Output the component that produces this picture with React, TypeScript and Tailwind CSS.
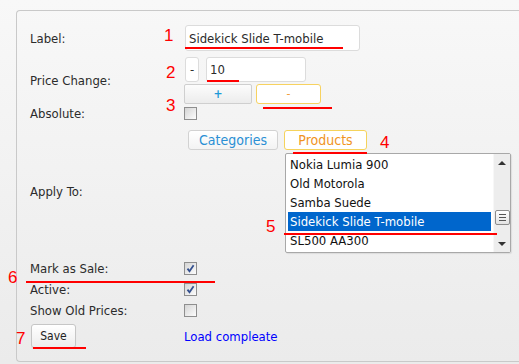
import React from 'react';

const products = ['Nokia Lumia 900', 'Old Motorola', 'Samba Suede', 'Sidekick Slide T-mobile', 'SL500 AA300'];

function CheckBox({ checked }: { checked?: boolean }) {
  return (
    <span className="relative block h-[13px] w-[13px] border border-[#8e8e8e] bg-linear-to-br from-[#d4d4d4] to-[#fdfdfd]">
      {checked && (
        <svg width="11" height="11" viewBox="0 0 11 11" className="absolute left-0 top-0">
          <path d="M2.5 5.6 L4.5 8.2 L8.6 2.3" fill="none" stroke="#34508f" strokeWidth="1.8" />
        </svg>
      )}
    </span>
  );
}

function Row({ label, className, children }: { label?: React.ReactNode; className?: string; children?: React.ReactNode }) {
  return (
    <div className={'flex items-center ' + (className ?? '')}>
      <div className="w-[154px] shrink-0 leading-[13px] text-[#2b2b2b]">{label}</div>
      <div className="leading-[13px]">{children}</div>
    </div>
  );
}

export default function App() {
  return (
    <div className="relative h-[364px] w-[519px] overflow-hidden bg-linear-to-b from-[#f8f8f8] to-[#ebebeb] pl-[16px] pt-[10px] font-['DejaVu_Sans_Condensed','DejaVu_Sans',sans-serif] text-[13px]">
      <div className="flex h-[352px] w-[520px] flex-col rounded-l-[4px] border border-r-0 border-[#c9c9c9] pl-[13px] pt-[14px]">
        <Row label="Label:">
          <input
            readOnly
            defaultValue="Sidekick Slide T-mobile"
            className="ml-[1px] block h-[26px] w-[175px] rounded-[3px] border border-[#dcdcdc] bg-white px-[3px] text-[#2b2b2b] outline-none"
          />
        </Row>

        <Row label="Price Change:" className="mt-[6px]">
          <div className="flex flex-col">
            <div className="flex">
              <div className="ml-[1px] flex h-[25px] w-[14px] items-center justify-center rounded-[3px] border border-[#dcdcdc] bg-white text-[#333]">
                -
              </div>
              <input
                readOnly
                defaultValue="10"
                className="ml-[7px] block h-[25px] w-[100px] rounded-[3px] border border-[#dcdcdc] bg-white px-[3px] text-[#2b2b2b] outline-none"
              />
            </div>
            <div className="mt-[2px] flex">
              <button className="flex h-[20px] w-[68px] items-center justify-center rounded-[2px] border border-[#cfcfcf] bg-linear-to-b from-[#fcfcfc] to-[#ececec] text-[12px] font-bold text-[#1e9ad8]">
                +
              </button>
              <button className="ml-[4px] flex h-[20px] w-[65px] items-center justify-center rounded-[3px] border border-[#f7d260] bg-white text-[12px] text-[#f0a040]">
                -
              </button>
            </div>
          </div>
        </Row>

        <Row label="Absolute:" className="mt-[3px]">
          <CheckBox />
        </Row>

        <Row label="Apply To:" className="mt-[10px]">
          <div className="flex flex-col">
            <div className="ml-[4px] flex h-[20px]">
              <button className="flex w-[90px] items-center justify-center rounded-[3px] border border-[#d2d2d2] bg-linear-to-b from-white to-[#f3f3f3] text-[14px] font-medium text-[#2a8fd4]">
                Categories
              </button>
              <button className="ml-[6px] flex w-[83px] items-center justify-center rounded-[3px] border border-[#f5d35c] bg-white text-[14px] font-medium text-[#f0941e]">
                Products
              </button>
            </div>
            <div className="ml-[101px] mt-[3px] flex h-[100px] w-[226px] rounded-[2px] border border-[#a8a8a8] bg-white shadow-[1px_1px_1px_rgba(0,0,0,0.08)]">
              <ul className="flex-1 p-[2px] pt-[1px]">
                {products.map((p, i) => (
                  <li
                    key={p}
                    className={
                      'h-[19px] px-[2px] leading-[20px] whitespace-nowrap ' +
                      (i === 3 ? 'bg-[#0066cc] text-white' : 'text-[#111]')
                    }
                  >
                    {p}
                  </li>
                ))}
              </ul>
              <div className="flex w-[17px] flex-col items-center border-l border-[#f7f7f7] bg-[#ededed]">
                <div className="flex h-[17px] items-center justify-center">
                  <span className="block h-0 w-0 border-x-[4px] border-b-[4px] border-x-transparent border-b-[#333]" />
                </div>
                <div className="mt-[39px] flex h-[15px] w-[15px] flex-col items-center justify-center gap-[2px] rounded-[2px] border border-[#8c8c8c] bg-linear-to-b from-white to-[#e2e2e2]">
                  <span className="block h-[1px] w-[7px] bg-[#555]" />
                  <span className="block h-[1px] w-[7px] bg-[#555]" />
                  <span className="block h-[1px] w-[7px] bg-[#555]" />
                </div>
                <div className="flex-1" />
                <div className="flex h-[17px] items-center justify-center">
                  <span className="block h-0 w-0 border-x-[4px] border-t-[4px] border-x-transparent border-t-[#333]" />
                </div>
              </div>
            </div>
          </div>
        </Row>

        <Row label="Mark as Sale:" className="mt-[9px]">
          <CheckBox checked />
        </Row>
        <Row label="Active:" className="mt-[8px]">
          <CheckBox checked />
        </Row>
        <Row label="Show Old Prices:" className="mt-[8px]">
          <CheckBox />
        </Row>

        <Row
          className="mt-[7px]"
          label={
            <button className="ml-[1px] flex h-[24px] w-[45px] items-center justify-center rounded-[3px] border border-[#c6c6c6] bg-linear-to-b from-white to-[#ededed] text-[12px] text-[#222] shadow-[0_1px_1px_rgba(0,0,0,0.06)]">
              Save
            </button>
          }
        >
          <span className="text-[#0000ff]">Load compleate</span>
        </Row>
      </div>

      {/* red annotations drawn over the screenshot */}
      <div className="pointer-events-none font-['Liberation_Sans',sans-serif] text-[17px] leading-none text-[#ff0000]">
        <span className="absolute left-[164px] top-[27px]">1</span>
        <span className="absolute left-[166px] top-[64px]">2</span>
        <span className="absolute left-[166px] top-[97px]">3</span>
        <span className="absolute left-[380px] top-[134px]">4</span>
        <span className="absolute left-[266px] top-[218px]">5</span>
        <span className="absolute left-[8px] top-[269px]">6</span>
        <span className="absolute left-[16px] top-[330px]">7</span>

        <span className="absolute left-[185px] top-[47px] h-[2px] w-[158px] bg-[#ff0000]" />
        <span className="absolute left-[207px] top-[80px] h-[2px] w-[32px] bg-[#ff0000]" />
        <span className="absolute left-[263px] top-[107px] h-[2px] w-[69px] bg-[#ff0000]" />
        <span className="absolute left-[293px] top-[152px] h-[2px] w-[74px] bg-[#ff0000]" />
        <span className="absolute left-[284px] top-[233px] h-[2px] w-[213px] bg-[#ff0000]" />
        <span className="absolute left-[26px] top-[281px] h-[2px] w-[189px] bg-[#ff0000]" />
        <span className="absolute left-[33px] top-[347px] h-[2px] w-[53px] bg-[#ff0000]" />
      </div>
    </div>
  );
}
